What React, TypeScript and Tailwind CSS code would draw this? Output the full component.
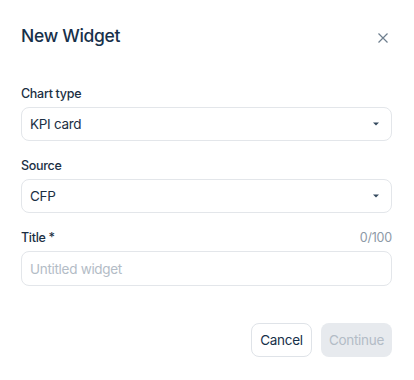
import React from 'react'

const Caret = () => (
  <svg width="6" height="4" viewBox="0 0 6 4" className="text-[#34495e]">
    <path d="M0 0.5h6L3 3.5z" fill="currentColor" />
  </svg>
)

const SelectBox = ({ value }: { value: string }) => (
  <div className="flex h-[34px] items-center justify-between rounded-lg border border-[#e3e6ea] bg-white pl-[8px] pr-[12px]">
    <span className="text-[13.5px] tracking-[-0.3px] text-[#1b2f44]">{value}</span>
    <Caret />
  </div>
)

const Label = ({ children }: { children: React.ReactNode }) => (
  <div className="h-4 text-[12.5px] leading-4 font-medium tracking-[-0.3px] text-[#1b2f44]">{children}</div>
)

export default function App() {
  return (
    <div className="h-[380px] w-[414px] bg-white font-['Inter',sans-serif]">
      <div className="flex w-[392px] flex-col pl-[21px] pt-[22px]">
        <div className="flex h-7 items-center justify-between">
          <h1 className="text-[17.5px] leading-7 font-medium tracking-[-0.3px] text-[#17304a]">New Widget</h1>
          <button className="mr-[4px] mt-[4px] text-[#6e7e8e]">
            <svg width="10" height="10" viewBox="0 0 10 10" fill="none" stroke="currentColor" strokeWidth="1.2">
              <path d="M0.5 0.5l9 9M9.5 0.5l-9 9" />
            </svg>
          </button>
        </div>

        <div className="mt-9 flex flex-col gap-[5px]">
          <Label>Chart type</Label>
          <SelectBox value="KPI card" />
        </div>

        <div className="mt-[17px] flex flex-col gap-[5px]">
          <Label>Source</Label>
          <SelectBox value="CFP" />
        </div>

        <div className="mt-[17px] flex flex-col gap-[5px]">
          <div className="flex items-center justify-between">
            <Label>Title *</Label>
            <span className="text-[12.5px] leading-4 tracking-[-0.2px] text-[#8d99a6]">0/100</span>
          </div>
          <input
            placeholder="Untitled widget"
            className="h-[35px] rounded-lg border border-[#e3e6ea] bg-white px-[8px] text-[13.5px] tracking-[-0.3px] text-[#1b2f44] outline-none placeholder:text-[#b3bcc6]"
          />
        </div>

        <div className="mt-[37px] flex justify-end gap-[9px]">
          <button className="h-[34px] w-[61px] rounded-lg border border-[#dfe3e8] bg-white text-[13.5px] tracking-[-0.3px] text-[#17304a]">
            Cancel
          </button>
          <button className="h-[34px] w-[71px] rounded-lg bg-[#e7eaee] text-[13.5px] tracking-[-0.3px] text-[#b3bcc6]">
            Continue
          </button>
        </div>
      </div>
    </div>
  )
}
